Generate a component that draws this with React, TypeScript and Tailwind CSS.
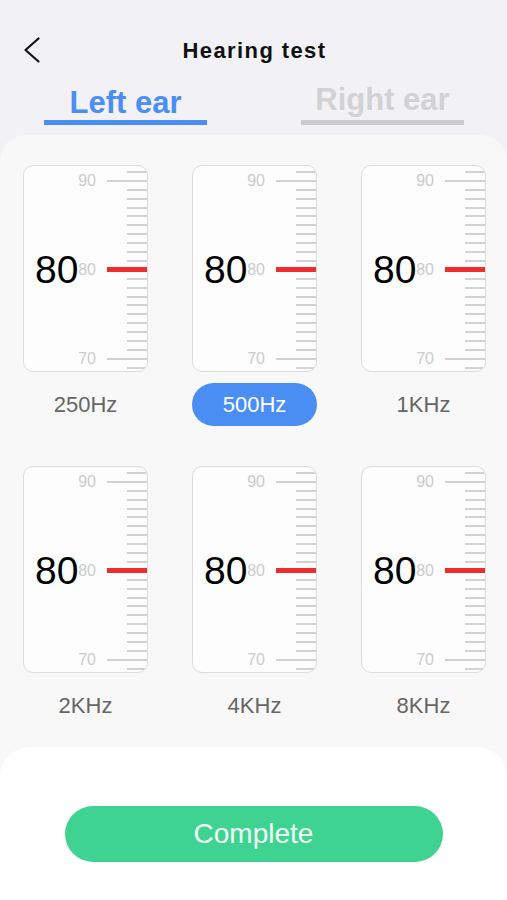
const freqs = [
  { label: "250Hz", value: 80 },
  { label: "500Hz", value: 80, active: true },
  { label: "1KHz", value: 80 },
  { label: "2KHz", value: 80 },
  { label: "4KHz", value: 80 },
  { label: "8KHz", value: 80 },
];

function Ruler() {
  // rows from 91 down to 69
  const rows = Array.from({ length: 23 }, (_, i) => 91 - i);
  return (
    <div className="flex flex-col pt-[1.6px]">
      {rows.map((v) => {
        const major = v % 10 === 0;
        const current = v === 80;
        return (
          <div key={v} className="flex h-[8.9px] items-center justify-end">
            {major && (
              <span className="mr-[11px] text-[16px] leading-none text-[#cbcbcb]">{v}</span>
            )}
            {current ? (
              <div className="h-[5px] w-[40px] bg-[#ef2b2d]" />
            ) : (
              <div className={`h-[2px] bg-[#d2d2d2] ${major ? "w-[40px]" : "w-[20px]"}`} />
            )}
          </div>
        );
      })}
    </div>
  );
}

function Gauge({ label, value, active }: { label: string; value: number; active?: boolean }) {
  return (
    <div className="flex flex-col">
      <div className="relative h-[207px] overflow-hidden rounded-[10px] border border-[#dcdcdc] bg-[#fdfdfd]">
        <Ruler />
        <span className="absolute left-[11px] top-1/2 -translate-y-1/2 text-[39px] leading-none text-black">
          {value}
        </span>
      </div>
      <div className="mt-[11px] flex h-[43px] items-center justify-center">
        {active ? (
          <div className="flex h-full w-full items-center justify-center rounded-full bg-[#4a8ef3] text-[22px] text-white">
            {label}
          </div>
        ) : (
          <span className="text-[22px] text-[#666666]">{label}</span>
        )}
      </div>
    </div>
  );
}

export default function App() {
  return (
    <div className="flex h-[900px] flex-col overflow-hidden bg-[#f2f2f6] font-['Liberation_Sans',Arial,sans-serif]">
      <div className="mt-[28px] grid h-[44px] grid-cols-3 items-center">
        <div className="pl-[23px]">
          <svg width="17" height="26" viewBox="0 0 17 26" fill="none">
            <polyline points="15.5,1.5 2.5,13 15.5,24.5" stroke="#111" strokeWidth="2.2" strokeLinecap="round" strokeLinejoin="round" />
          </svg>
        </div>
        <div className="whitespace-nowrap pl-[2px] text-center text-[22px] font-bold tracking-[1.4px] text-[#111]">
          Hearing test
        </div>
        <div />
      </div>

      <div className="mt-[11px] flex items-end gap-[94px] pl-[44px]">
        <div className="flex w-[163px] flex-col items-center">
          <span className="h-[34px] text-[31px] font-bold leading-[34px] text-[#4a8ef3]">Left ear</span>
          <div className="h-[5px] w-full bg-[#4a8ef3]" />
        </div>
        <div className="flex w-[163px] flex-col items-center">
          <span className="mb-[3px] h-[34px] text-[31px] font-bold leading-[34px] text-[#d2d2d2]">Right ear</span>
          <div className="h-[5px] w-full bg-[#cbcbcb]" />
        </div>
      </div>

      <div className="mt-[10px] flex flex-1 flex-col rounded-t-[26px] bg-[#f8f8f8]">
        <div className="grid grid-cols-[125px_125px_125px] gap-x-[44px] gap-y-[40px] pl-[23px] pt-[30px]">
          {freqs.map((f) => (
            <Gauge key={f.label} label={f.label} value={f.value} active={f.active} />
          ))}
        </div>

        <div className="mt-[20px] flex-1 rounded-t-[30px] bg-white pt-[59px]">
          <button
            type="button"
            className="mx-auto flex h-[56px] w-[378px] items-center justify-center rounded-full bg-[#3fd391] text-[28px] text-[#f0fff7]"
          >
            Complete
          </button>
        </div>
      </div>
    </div>
  );
}
